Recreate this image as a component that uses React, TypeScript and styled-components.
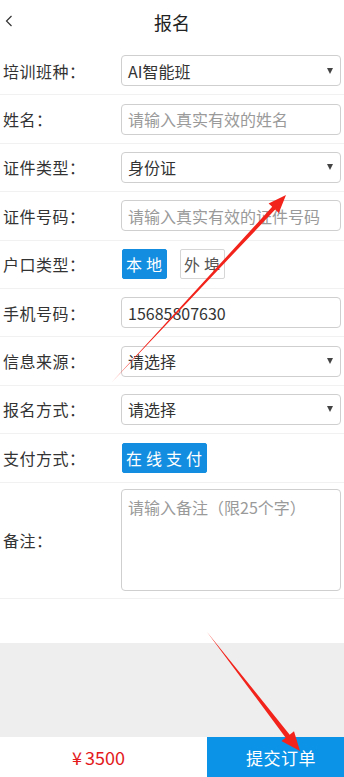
import styled, { createGlobalStyle } from "styled-components";

const GlobalStyle = createGlobalStyle`
  html, body {
    margin: 0;
    padding: 0;
    background: #fff;
  }
  body {
    font-family: "Noto Sans CJK SC", "Noto Sans", sans-serif;
    color: #333;
  }
  * {
    box-sizing: border-box;
  }
`;

const Page = styled.div`
  position: relative;
  width: 344px;
  height: 777px;
  display: flex;
  flex-direction: column;
  background: #fff;
  overflow: hidden;
`;

const Header = styled.div`
  height: 47px;
  flex-shrink: 0;
  display: flex;
  align-items: center;
  justify-content: center;
  position: relative;
`;

const BackButton = styled.div`
  position: absolute;
  left: 5px;
  top: 15px;
  width: 10px;
  height: 12px;
  display: flex;
`;

const Title = styled.h1`
  margin: 0 0 3px;
  font-size: 18px;
  font-weight: 400;
  color: #222;
  line-height: 24px;
`;

const Form = styled.div`
  display: flex;
  flex-direction: column;
  padding-bottom: 44px;
  flex-shrink: 0;
`;

const Row = styled.div<{ $tall?: boolean }>`
  height: ${({ $tall }) => ($tall ? "116px" : "48.4px")};
  display: flex;
  align-items: center;
  padding: 0 3px;
  border-bottom: 1px solid #f1f1f1;
`;

const Label = styled.div`
  width: 118px;
  flex-shrink: 0;
  font-size: 16px;
  color: #333;
  letter-spacing: 0.5px;
`;

const TextInput = styled.input`
  flex: 1;
  min-width: 0;
  height: 31px;
  border: 1px solid #cfcfcf;
  border-radius: 4px;
  padding: 0 6px;
  font-family: inherit;
  font-size: 16px;
  color: #333;
  background: #fff;
  outline: none;

  &::placeholder {
    color: #9a9a9a;
  }
`;

const SelectBox = styled.div`
  flex: 1;
  height: 31px;
  border: 1px solid #cfcfcf;
  border-radius: 4px;
  padding: 0 6px;
  display: flex;
  align-items: center;
  justify-content: space-between;
  font-size: 16px;
  color: #333;
`;

const Caret = styled.span`
  width: 0;
  height: 0;
  margin-right: 1px;
  border-left: 3.5px solid transparent;
  border-right: 3.5px solid transparent;
  border-top: 6px solid #444;
`;

const TagGroup = styled.div`
  display: flex;
  gap: 12px;
`;

const Tag = styled.div<{ $active?: boolean }>`
  height: 30px;
  padding: 0 0 0 3px;
  display: flex;
  align-items: center;
  border-radius: 2px;
  font-size: 16px;
  letter-spacing: 4px;
  white-space: nowrap;
  background: ${({ $active }) => ($active ? "#128de0" : "#fff")};
  color: ${({ $active }) => ($active ? "#fff" : "#555")};
  border: 1px solid ${({ $active }) => ($active ? "#128de0" : "#d6d6d6")};
  margin-left: 1px;
`;

const TextArea = styled.textarea`
  flex: 1;
  height: 102px;
  border: 1px solid #cfcfcf;
  border-radius: 4px;
  padding: 5px 6px;
  font-family: inherit;
  font-size: 16px;
  color: #333;
  resize: none;
  outline: none;
  line-height: 24px;

  &::placeholder {
    color: #9a9a9a;
  }
`;

const Filler = styled.div`
  flex: 1;
  background: #eeeeee;
`;

const Footer = styled.div`
  height: 40px;
  flex-shrink: 0;
  display: flex;
  background: #fff;
`;

const Price = styled.div`
  width: 207px;
  display: flex;
  align-items: center;
  justify-content: center;
  gap: 3px;
  padding-right: 10px;
  font-size: 18px;
  color: #e3191c;
`;

const Submit = styled.div`
  flex: 1;
  display: flex;
  align-items: center;
  justify-content: center;
  padding-left: 11px;
  background: #0b93e8;
  color: #fff;
  font-size: 17px;
  letter-spacing: 0.5px;
`;

const Annotations = styled.svg`
  position: absolute;
  left: 0;
  top: 0;
  pointer-events: none;
`;

export default function App() {
  return (
    <>
      <GlobalStyle />
      <Page>
        <Header>
          <BackButton>
            <svg width="10" height="12" viewBox="0 0 10 12">
              <polyline
                points="6.5,1 1.5,6 6.5,11"
                fill="none"
                stroke="#333"
                strokeWidth="1.2"
              />
            </svg>
          </BackButton>
          <Title>报名</Title>
        </Header>

        <Form>
          <Row>
            <Label>培训班种：</Label>
            <SelectBox>
              <span>AI智能班</span>
              <Caret />
            </SelectBox>
          </Row>
          <Row>
            <Label>姓名：</Label>
            <TextInput placeholder="请输入真实有效的姓名" />
          </Row>
          <Row>
            <Label>证件类型：</Label>
            <SelectBox>
              <span>身份证</span>
              <Caret />
            </SelectBox>
          </Row>
          <Row>
            <Label>证件号码：</Label>
            <TextInput placeholder="请输入真实有效的证件号码" />
          </Row>
          <Row>
            <Label>户口类型：</Label>
            <TagGroup>
              <Tag $active>本地</Tag>
              <Tag>外埠</Tag>
            </TagGroup>
          </Row>
          <Row>
            <Label>手机号码：</Label>
            <TextInput defaultValue="15685807630" />
          </Row>
          <Row>
            <Label>信息来源：</Label>
            <SelectBox>
              <span>请选择</span>
              <Caret />
            </SelectBox>
          </Row>
          <Row>
            <Label>报名方式：</Label>
            <SelectBox>
              <span>请选择</span>
              <Caret />
            </SelectBox>
          </Row>
          <Row>
            <Label>支付方式：</Label>
            <Tag $active>在线支付</Tag>
          </Row>
          <Row $tall>
            <Label>备注：</Label>
            <TextArea placeholder="请输入备注（限25个字）" />
          </Row>
        </Form>

        <Filler />

        <Footer>
          <Price>
            <span>¥</span>
            <span>3500</span>
          </Price>
          <Submit>提交订单</Submit>
        </Footer>

        <Annotations width="344" height="777" viewBox="0 0 344 777">
          <polygon
            points="112,382 275.2,209.6 278.8,213 286,195 268.6,203.4 272.2,206.8"
            fill="#f2231b"
          />
          <polygon
            points="207,632 289.7,734.7 294,731.3 300,751 281.4,741.1 285.7,737.7"
            fill="#f2231b"
          />
        </Annotations>
      </Page>
    </>
  );
}
